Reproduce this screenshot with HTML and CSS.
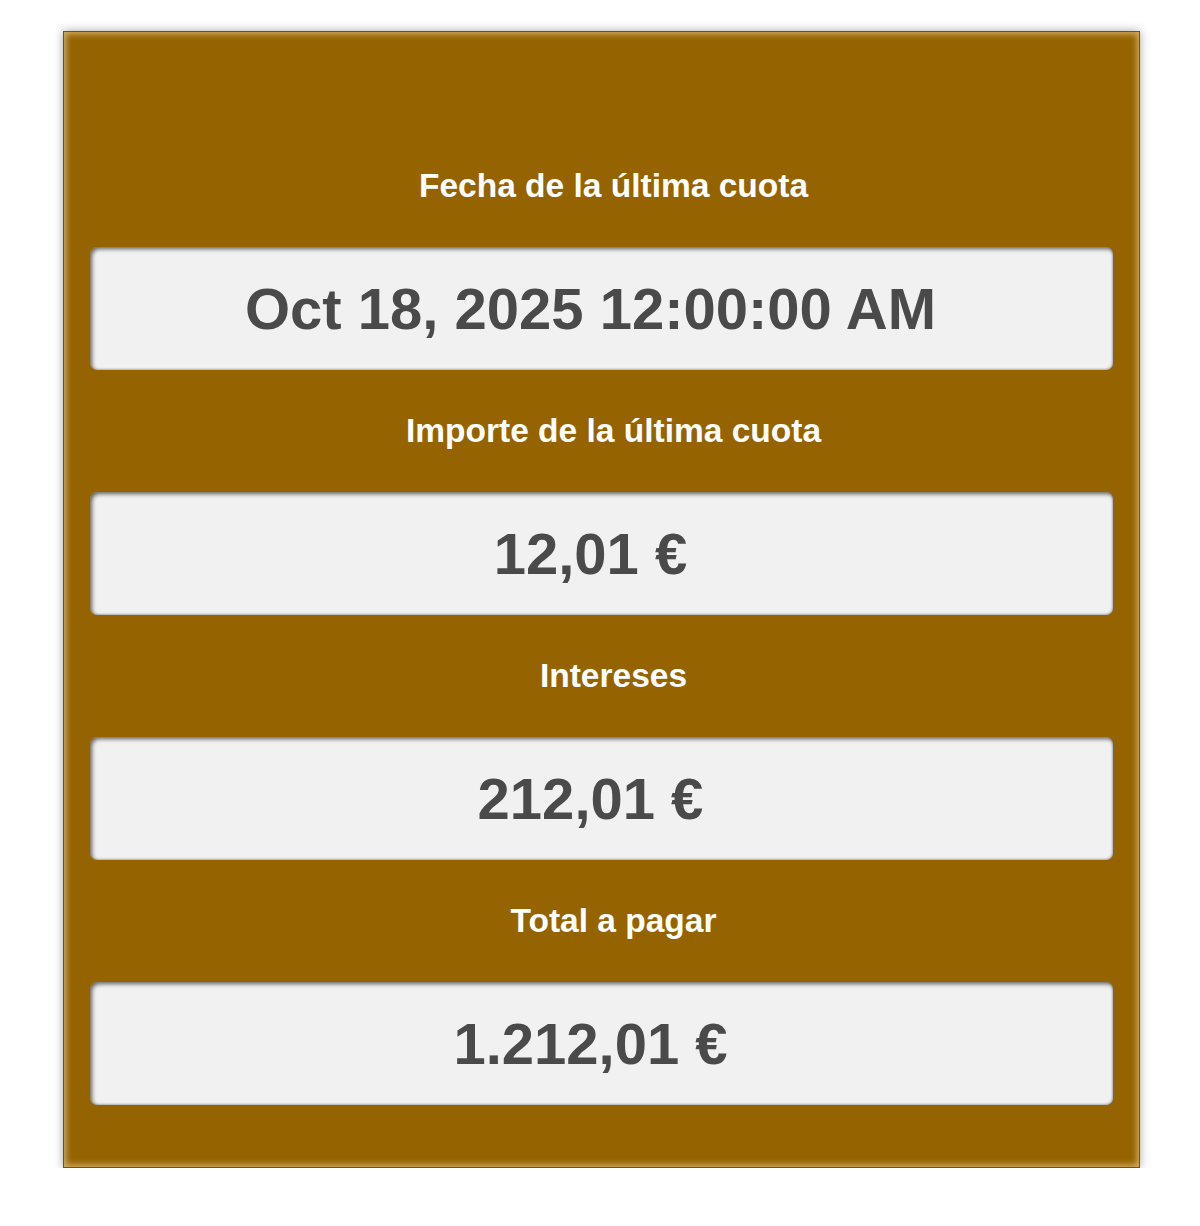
FILE: index.html
```html
<!DOCTYPE html>
<html lang="es">
<head>
<meta charset="utf-8">
<title>Resultado</title>
<link rel="stylesheet" href="styles.css">
</head>
<body>
<div class="panel">
  <div class="label">Fecha de la última cuota</div>
  <div class="value">Oct 18, 2025 12:00:00 AM</div>
  <div class="label">Importe de la última cuota</div>
  <div class="value">12,01 €</div>
  <div class="label">Intereses</div>
  <div class="value">212,01 €</div>
  <div class="label">Total a pagar</div>
  <div class="value">1.212,01 €</div>
</div>
</body>
</html>
```
FILE: styles.css
```css
html, body {
  margin: 0;
  padding: 0;
  background: #ffffff;
}
body {
  padding-top: 31px;
  font-family: "Liberation Sans", Arial, sans-serif;
}
.panel {
  box-sizing: border-box;
  width: 1077px;
  height: 1137px;
  margin-left: 63px;
  background: #956300;
  border: 1px solid #7a5200;
  box-shadow: inset 0 0 6px 2px rgba(255, 230, 170, 0.6), 0 0 9px rgba(0, 0, 0, 0.35);
  padding: 92px 26px 0 26px;
  display: flex;
  flex-direction: column;
}
.label {
  height: 122px;
  display: flex;
  align-items: center;
  justify-content: center;
  padding-left: 24px;
  color: #ffffff;
  font-weight: bold;
  font-size: 33.5px;
}
.label:first-child {
  height: 123px;
}
.value {
  height: 123px;
  border-radius: 7px;
  background: #f1f1f1;
  box-shadow: inset 2px 2px 4px rgba(0, 0, 0, 0.6), inset -1px -1px 2px rgba(0, 0, 0, 0.2);
  display: flex;
  align-items: center;
  justify-content: center;
  padding-right: 22px;
  color: #4a4a4a;
  font-weight: bold;
  font-size: 58px;
}
```
